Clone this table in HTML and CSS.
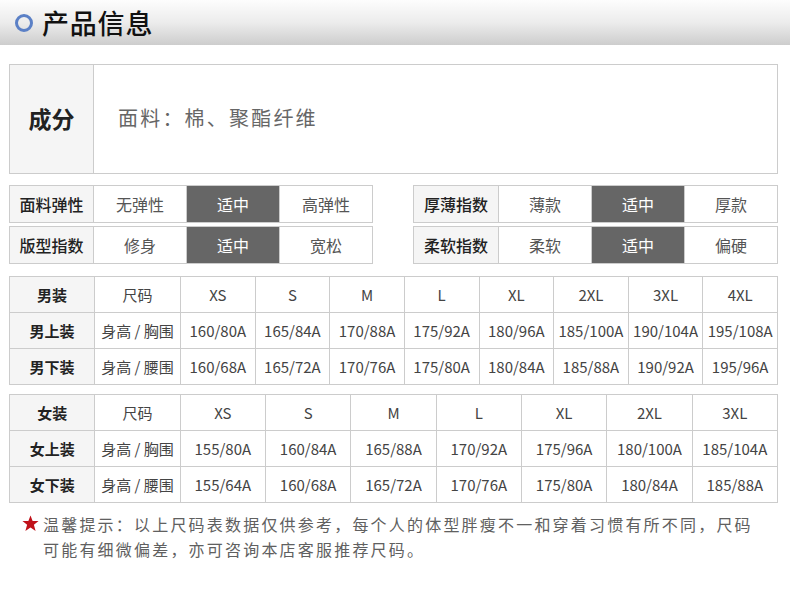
FILE: index.html
```html
<!DOCTYPE html>
<html lang="zh">
<head>
<meta charset="utf-8">
<link rel="stylesheet" href="styles.css">
</head>
<body>
<div class="header">
  <span class="ring"></span>
  <h1 class="title">产品信息</h1>
</div>
<div class="page">
  <div class="comp">
    <div class="comp-label">成分</div>
    <div class="comp-text">面料：棉、聚酯纤维</div>
  </div>

  <div class="attrs">
    <div class="attr-col">
      <div class="attr-row">
        <div class="attr-label">面料弹性</div>
        <div class="attr-opt">无弹性</div>
        <div class="attr-opt on">适中</div>
        <div class="attr-opt">高弹性</div>
      </div>
      <div class="attr-row">
        <div class="attr-label">版型指数</div>
        <div class="attr-opt">修身</div>
        <div class="attr-opt on">适中</div>
        <div class="attr-opt">宽松</div>
      </div>
    </div>
    <div class="attr-col">
      <div class="attr-row">
        <div class="attr-label">厚薄指数</div>
        <div class="attr-opt">薄款</div>
        <div class="attr-opt on">适中</div>
        <div class="attr-opt">厚款</div>
      </div>
      <div class="attr-row">
        <div class="attr-label">柔软指数</div>
        <div class="attr-opt">柔软</div>
        <div class="attr-opt on">适中</div>
        <div class="attr-opt">偏硬</div>
      </div>
    </div>
  </div>

  <table class="size size-men">
    <colgroup>
      <col class="c-lab"><col class="c-unit">
      <col><col><col><col><col><col><col><col>
    </colgroup>
    <tr><th>男装</th><td>尺码</td><td>XS</td><td>S</td><td>M</td><td>L</td><td>XL</td><td>2XL</td><td>3XL</td><td>4XL</td></tr>
    <tr><th>男上装</th><td>身高 / 胸围</td><td>160/80A</td><td>165/84A</td><td>170/88A</td><td>175/92A</td><td>180/96A</td><td>185/100A</td><td>190/104A</td><td>195/108A</td></tr>
    <tr><th>男下装</th><td>身高 / 腰围</td><td>160/68A</td><td>165/72A</td><td>170/76A</td><td>175/80A</td><td>180/84A</td><td>185/88A</td><td>190/92A</td><td>195/96A</td></tr>
  </table>

  <table class="size size-women">
    <colgroup>
      <col class="c-lab"><col class="c-unit">
      <col><col><col><col><col><col><col>
    </colgroup>
    <tr><th>女装</th><td>尺码</td><td>XS</td><td>S</td><td>M</td><td>L</td><td>XL</td><td>2XL</td><td>3XL</td></tr>
    <tr><th>女上装</th><td>身高 / 胸围</td><td>155/80A</td><td>160/84A</td><td>165/88A</td><td>170/92A</td><td>175/96A</td><td>180/100A</td><td>185/104A</td></tr>
    <tr><th>女下装</th><td>身高 / 腰围</td><td>155/64A</td><td>160/68A</td><td>165/72A</td><td>170/76A</td><td>175/80A</td><td>180/84A</td><td>185/88A</td></tr>
  </table>

  <div class="note">
    <svg class="star" viewBox="0 0 20 20" width="17" height="17"><polygon points="10,0.5 12.5,7 19.5,7.2 14,11.6 16,18.8 10,14.6 4,18.8 6,11.6 0.5,7.2 7.5,7" fill="#c0121a"/></svg>
    <p class="note-text">温馨提示：以上尺码表数据仅供参考，每个人的体型胖瘦不一和穿着习惯有所不同，尺码可能有细微偏差，亦可咨询本店客服推荐尺码。</p>
  </div>
</div>
</body>
</html>
```
FILE: styles.css
```css
* { box-sizing: border-box; }
html, body { margin: 0; padding: 0; background: #fff; }
body {
  font-family: "Noto Sans CJK SC", "Noto Sans", sans-serif;
  color: #333;
  width: 790px;
}
.header {
  height: 45px;
  background: linear-gradient(#fdfdfd 0%, #ececec 50%, #cdcdcd 100%);
  display: flex;
  align-items: center;
  padding-left: 15px;
}
.ring {
  width: 18px;
  height: 18px;
  border: 3px solid #5b80c6;
  border-radius: 50%;
  margin-top: 1px;
}
.title {
  margin: 0 0 0 9px;
  font-size: 27px;
  font-weight: 500;
  color: #111;
  line-height: 45px;
  letter-spacing: 0.8px;
}
.page {
  padding: 19px 12px 0 9px;
}
.comp {
  display: flex;
  height: 110px;
  border: 1px solid #ccc;
}
.comp-label {
  width: 84px;
  background: #f5f5f5;
  border-right: 1px solid #ccc;
  display: flex;
  align-items: center;
  justify-content: center;
  padding-bottom: 2px;
  font-size: 23px;
  font-weight: 700;
  color: #222;
}
.comp-text {
  display: flex;
  align-items: center;
  padding-left: 24px;
  padding-bottom: 4px;
  font-size: 20px;
  letter-spacing: 2.2px;
  color: #666;
}
.attrs {
  display: flex;
  justify-content: space-between;
  margin-top: 11px;
}
.attr-col {
  display: flex;
  flex-direction: column;
  gap: 3px;
}
.attr-row {
  display: flex;
  height: 38px;
  border: 1px solid #ccc;
}
.attr-label {
  width: 84px;
  background: #f5f5f5;
  border-right: 1px solid #ccc;
  display: flex;
  align-items: center;
  justify-content: center;
  padding-bottom: 1px;
  font-size: 16px;
  font-weight: 500;
  color: #222;
}
.attr-col:last-child .attr-label { width: 85px; }
.attr-opt {
  width: 93px;
  display: flex;
  align-items: center;
  justify-content: center;
  padding-bottom: 1px;
  font-size: 16px;
  color: #555;
  border-right: 1px solid #ccc;
}
.attr-opt:last-child { border-right: 0; width: 92px; }
.attr-opt.on {
  background: #666;
  color: #fff;
}
.size {
  width: 769px;
  border-collapse: collapse;
  table-layout: fixed;
  margin-top: 12px;
}
.size-women { margin-top: 9px; }
.size th, .size td {
  border: 1px solid #ccc;
  height: 36px;
  padding: 0;
  text-align: center;
  font-size: 15px;
  color: #444;
  white-space: nowrap;
}
.size th {
  background: #f5f5f5;
  font-weight: 700;
  color: #222;
}
.size-men .c-lab { width: 85px; }
.size-men .c-unit { width: 86px; }
.note {
  display: flex;
  align-items: flex-start;
  margin-top: 9px;
  padding-left: 13px;
}
.star {
  flex: none;
  margin-top: 3px;
}
.note-text {
  margin: 0 0 0 4px;
  width: 722px;
  font-size: 16px;
  line-height: 25px;
  letter-spacing: 2.2px;
  color: #606060;
}
```
